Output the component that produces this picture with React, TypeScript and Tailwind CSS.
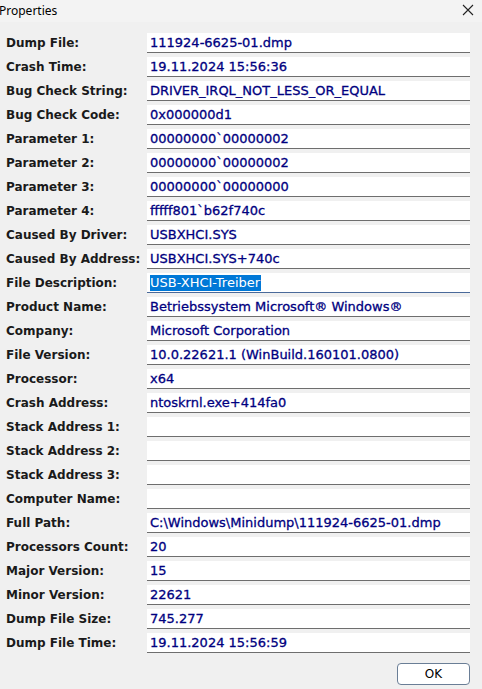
import React from "react";

const rows: [string, string][] = [
  ["Dump File:", "111924-6625-01.dmp"],
  ["Crash Time:", "19.11.2024 15:56:36"],
  ["Bug Check String:", "DRIVER_IRQL_NOT_LESS_OR_EQUAL"],
  ["Bug Check Code:", "0x000000d1"],
  ["Parameter 1:", "00000000`00000002"],
  ["Parameter 2:", "00000000`00000002"],
  ["Parameter 3:", "00000000`00000000"],
  ["Parameter 4:", "fffff801`b62f740c"],
  ["Caused By Driver:", "USBXHCI.SYS"],
  ["Caused By Address:", "USBXHCI.SYS+740c"],
  ["File Description:", "USB-XHCI-Treiber"],
  ["Product Name:", "Betriebssystem Microsoft® Windows®"],
  ["Company:", "Microsoft Corporation"],
  ["File Version:", "10.0.22621.1 (WinBuild.160101.0800)"],
  ["Processor:", "x64"],
  ["Crash Address:", "ntoskrnl.exe+414fa0"],
  ["Stack Address 1:", ""],
  ["Stack Address 2:", ""],
  ["Stack Address 3:", ""],
  ["Computer Name:", ""],
  ["Full Path:", "C:\\Windows\\Minidump\\111924-6625-01.dmp"],
  ["Processors Count:", "20"],
  ["Major Version:", "15"],
  ["Minor Version:", "22621"],
  ["Dump File Size:", "745.277"],
  ["Dump File Time:", "19.11.2024 15:56:59"],
];

const dv = { fontFamily: '"DejaVu Sans", Verdana, sans-serif' };

export default function App() {
  return (
    <div
      className="w-[482px] h-[689px] bg-[#f0f0f0] overflow-hidden flex flex-col"
      style={{ fontFamily: '"Liberation Sans", Arial, sans-serif' }}
    >
      <div className="h-[22px] flex items-center justify-between bg-[#f3f3f3]">
        <span className="ml-[-1px] text-[12px] text-black" style={{ fontFamily: '"Noto Sans", "Liberation Sans", sans-serif' }}>
          Properties
        </span>
        <svg width="12" height="12" viewBox="0 0 12 12" className="mr-[8px] mt-[-2px]">
          <path d="M1 1 L11 11 M11 1 L1 11" stroke="#222" strokeWidth="1.1" />
        </svg>
      </div>
      <div className="flex flex-col gap-[4px] mt-[11px]">
        {rows.map(([label, value]) => {
          const focused = label === "File Description:";
          return (
            <div key={label} className="flex items-center h-[20px]">
              <div className="w-[147px] pl-[6px] text-[12px] font-bold text-[#1a1a1a] leading-none" style={dv}>
                {label}
              </div>
              <div
                className={
                  "w-[323px] h-[20px] bg-white flex items-center pl-[3px] border-b " +
                  (focused ? "border-[#4a6a9a]" : "border-[#6e6e6e]")
                }
              >
                {focused ? (
                  <span className="bg-[#0078d7] text-white text-[13px] leading-[16px] pr-[1px]" style={dv}>
                    {value}
                  </span>
                ) : (
                  <span className="text-[#000080] text-[13px] leading-none" style={{ ...dv, WebkitTextStroke: "0.3px #000080" }}>
                    {value}
                  </span>
                )}
              </div>
            </div>
          );
        })}
      </div>
      <div className="flex justify-end mt-[10px] pr-[12px]">
        <button className="w-[73px] h-[22px] bg-white border border-[#6a7e96] rounded-[4px] text-[12px] text-black flex items-center justify-center" style={dv}>
          OK
        </button>
      </div>
    </div>
  );
}
